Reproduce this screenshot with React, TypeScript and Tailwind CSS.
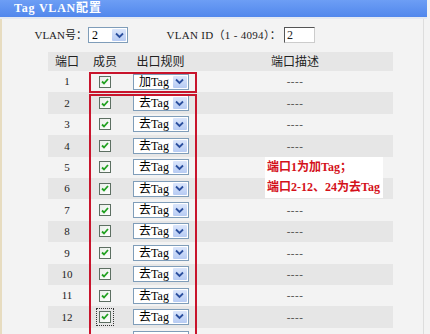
import React from 'react';

const font = { fontFamily: '"Liberation Serif", "Noto Sans CJK SC", serif' };

const Chevron: React.FC = () => (
  <svg width="9" height="7" viewBox="0 0 9 7">
    <path d="M1 1.5 L4.5 5 L8 1.5" fill="none" stroke="#2b4f9e" strokeWidth="1.8" />
  </svg>
);

interface SelectProps {
  value: string;
  width: string;
}

const FakeSelect: React.FC<SelectProps> = ({ value, width }) => (
  <div className={`${width} h-[16px] flex items-stretch border border-[#7f9db9] bg-white`}>
    <span className="flex-1 pl-[3px] text-[12px] leading-[14px] text-black">{value}</span>
    <span className="w-[14px] m-[1px] flex items-center justify-center bg-gradient-to-b from-[#dbe6fb] to-[#b7cbf3] rounded-[1px]">
      <Chevron />
    </span>
  </div>
);

const CheckBox: React.FC<{ focused?: boolean }> = ({ focused }) => (
  <div className={focused ? 'p-[2px] outline outline-1 outline-dotted outline-[#333]' : 'p-[2px]'}>
    <div className="w-[12px] h-[12px] border border-[#5d6f62] bg-gradient-to-br from-[#e9eee9] to-white flex items-center justify-center">
      <svg width="8" height="7" viewBox="0 0 8 7">
        <path d="M1 3.5 L3 5.5 L7 1" fill="none" stroke="#21a121" strokeWidth="1.8" />
      </svg>
    </div>
  </div>
);

const rows = Array.from({ length: 12 }, (_, i) => i + 1);

const App: React.FC = () => {
  return (
    <div className="relative w-[430px] h-[334px] overflow-hidden bg-[#f3f3f3] text-[#222]" style={font}>
      <div className="h-[17px] w-[427px] bg-gradient-to-b from-[#6d9ef5] to-[#5187ec] pl-[14px] text-white font-bold text-[12px] leading-[17px] tracking-[0.8px]">
        Tag VLAN配置
      </div>
      <div className="h-[2px] w-[427px] bg-[#e4e9f2]" />

      <div className="h-[315px] w-[424px] border-l-[2px] border-[#e7dcc0] border-r border-r-[#dddddd]">
        <div className="pt-[8px] flex items-center h-[24px]">
          <span className="w-[86px] text-right text-[11px] pr-[1px]">VLAN号：</span>
          <FakeSelect value="2" width="w-[40px]" />
          <span className="w-[153px] text-right text-[11px] tracking-[0.3px]">VLAN ID（1 - 4094）：</span>
          <div className="ml-[3px] w-[31px] h-[16px] border border-[#555] border-r-[#ccc] border-b-[#ccc] bg-white text-[12px] leading-[14px] pl-[2px]">
            2
          </div>
        </div>

        <div className="ml-[46px] mt-[9px] w-[345px]">
          <div className="grid grid-cols-[38px_38px_73px_196px] h-[19px] bg-[#e6e6e6] items-center text-center text-[12px]">
            <span>端口</span>
            <span>成员</span>
            <span>出口规则</span>
            <span>端口描述</span>
          </div>
          {rows.map((n) => (
            <div
              key={n}
              className={`grid grid-cols-[38px_38px_73px_196px] h-[21.4px] items-center text-center text-[11px] ${
                n % 2 === 0 ? 'bg-[#e6e6e6]' : ''
              }`}
            >
              <span>{n}</span>
              <span className="flex justify-center">
                <CheckBox focused={n === 12} />
              </span>
              <span className="flex justify-center">
                <FakeSelect value={n === 1 ? '加Tag' : '去Tag'} width="w-[56px]" />
              </span>
              <span className="text-[#444] tracking-[0.5px]">{n === 5 || n === 6 ? '' : '----'}</span>
            </div>
          ))}
          {/* partly visible 13th row */}
          <div className="grid grid-cols-[38px_38px_73px_196px] h-[21.4px] items-start pt-[3px]">
            <span />
            <span />
            <span className="flex justify-center">
              <div className="w-[56px] h-[16px] border border-[#7f9db9] bg-white" />
            </span>
            <span />
          </div>
        </div>
      </div>

      <div className="absolute left-[89px] top-[72px] w-[108px] h-[21px] border-2 border-[#c8142c]" />
      <div className="absolute left-[89px] top-[94px] w-[108px] h-[260px] border-2 border-[#c8142c]" />

      <div className="absolute left-[265px] top-[157px] w-[118px] h-[41px] bg-white flex flex-col justify-center gap-[7px] pl-[2px] text-[12px] leading-[13px] font-bold text-[#d4101a]">
        <span>端口1为加Tag；</span>
        <span>端口2-12、24为去Tag</span>
      </div>
    </div>
  );
};

export default App;
